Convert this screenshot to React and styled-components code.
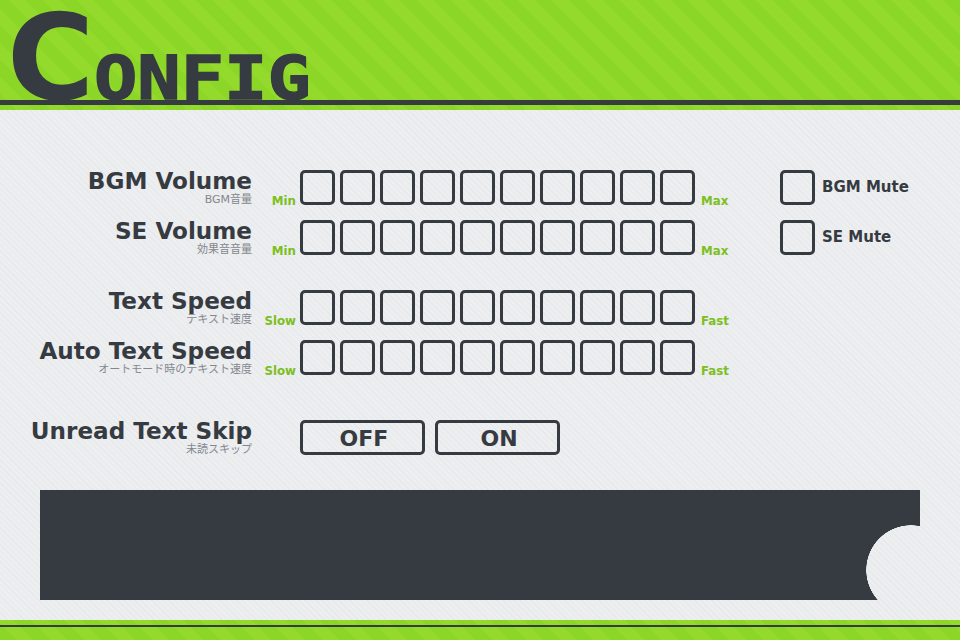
import React from "react";
import styled, { createGlobalStyle } from "styled-components";

const INK = "#363a41";

const GlobalStyle = createGlobalStyle`
  html, body {
    margin: 0;
    padding: 0;
  }
  body {
    font-family: "DejaVu Sans", sans-serif;
    color: ${INK};
  }
`;

const greenStripes = `repeating-linear-gradient(
  45deg,
  #8bd626 0,
  #8bd626 12px,
  #93da2d 12px,
  #93da2d 24px
)`;

const Screen = styled.div`
  width: 960px;
  height: 640px;
  overflow: hidden;
  display: flex;
  flex-direction: column;
  background: repeating-linear-gradient(
    45deg,
    #eceef0 0,
    #eceef0 3px,
    #e6e8eb 3px,
    #e6e8eb 4px
  );
`;

// top band with the title
const Header = styled.header`
  height: 110px;
  flex: none;
  display: flex;
  flex-direction: column;
  background: ${greenStripes};
`;

const TitleBand = styled.div`
  height: 100px;
  flex: none;
  padding-left: 7px;
`;

const Title = styled.h1`
  margin: 0;
  height: 100px;
  display: flex;
  align-items: baseline;
  font-weight: bold;
  line-height: 116px;
  white-space: nowrap;
`;

const TitleCap = styled.span`
  font-family: "DejaVu Sans", sans-serif;
  font-size: 119px;
  width: 87px;
`;

const TitleRest = styled.span`
  font-family: "DejaVu Sans Mono", monospace;
  font-size: 60px;
  -webkit-text-stroke: 1.3px ${INK};
  transform: scaleX(1.2);
  transform-origin: left;
`;

const HeaderRule = styled.div`
  height: 5px;
  flex: none;
  background: ${INK};
`;

const Content = styled.main`
  flex: 1;
  padding: 60px 40px 20px 0;
  display: flex;
  flex-direction: column;
`;

const Group = styled.section`
  display: flex;
  flex-direction: column;
  gap: 15px;
  margin-bottom: ${(p) => p.$after}px;
`;

const Row = styled.div`
  display: flex;
  height: 35px;
`;

const LabelBox = styled.div`
  width: 252px;
  flex: none;
  text-align: right;
`;

const Label = styled.div`
  font-size: 23.1px;
  font-weight: bold;
  line-height: 22px;
`;

const SubLabel = styled.div`
  font-family: "DejaVu Sans", "Noto Sans CJK JP", sans-serif;
  font-size: 11px;
  line-height: 13px;
  color: #84888e;
  margin-top: 1px;
`;

const Scale = styled.div`
  width: 48px;
  flex: none;
  align-self: flex-end;
  padding-right: 4px;
  box-sizing: border-box;
  text-align: right;
  font-size: 11.8px;
  font-weight: bold;
  line-height: 14px;
  color: #7cbf20;
  margin-bottom: -3px;
`;

const ScaleEnd = styled(Scale)`
  width: 85px;
  padding: 0 0 0 6px;
  text-align: left;
`;

const Steps = styled.div`
  display: flex;
  gap: 5px;
`;

const Box = styled.div`
  width: 35px;
  height: 35px;
  box-sizing: border-box;
  border: 3px solid ${INK};
  border-radius: 5px;
`;

const Mute = styled.div`
  display: flex;
  align-items: center;
  gap: 7px;
`;

const MuteText = styled.span`
  font-size: 15px;
  font-weight: bold;
  padding-bottom: 2px;
`;

const Toggles = styled.div`
  display: flex;
  gap: 10px;
  margin-left: 48px;
`;

const Toggle = styled.div`
  width: 125px;
  height: 35px;
  box-sizing: border-box;
  border: 3px solid ${INK};
  border-radius: 5px;
  padding: 1px 0 0 3px;
  display: flex;
  align-items: center;
  justify-content: center;
  font-size: 22px;
  font-weight: bold;
`;

// the round notch lets the page background show through
const MessagePanel = styled.div`
  height: 110px;
  margin-left: 40px;
  flex: none;
  background: radial-gradient(
    circle 45px at 871px 80px,
    transparent 44.5px,
    ${INK} 45px
  );
`;

const Footer = styled.footer`
  height: 20px;
  flex: none;
  padding-top: 5px;
  box-sizing: border-box;
  background: ${greenStripes};
`;

const FooterRule = styled.div`
  height: 2px;
  background: ${INK};
`;

const StepRow = ({ label, sub, min, max, mute }) => (
  <Row>
    <LabelBox>
      <Label>{label}</Label>
      <SubLabel>{sub}</SubLabel>
    </LabelBox>
    <Scale>{min}</Scale>
    <Steps>
      {Array.from({ length: 10 }, (_, i) => (
        <Box key={i} />
      ))}
    </Steps>
    <ScaleEnd>{max}</ScaleEnd>
    {mute && (
      <Mute>
        <Box />
        <MuteText>{mute}</MuteText>
      </Mute>
    )}
  </Row>
);

export default function App() {
  return (
    <Screen>
      <GlobalStyle />
      <Header>
        <TitleBand>
          <Title>
            <TitleCap>C</TitleCap>
            <TitleRest>ONFIG</TitleRest>
          </Title>
        </TitleBand>
        <HeaderRule />
      </Header>
      <Content>
        <Group $after={35}>
          <StepRow label="BGM Volume" sub="BGM音量" min="Min" max="Max" mute="BGM Mute" />
          <StepRow label="SE Volume" sub="効果音音量" min="Min" max="Max" mute="SE Mute" />
        </Group>
        <Group $after={45}>
          <StepRow label="Text Speed" sub="テキスト速度" min="Slow" max="Fast" />
          <StepRow label="Auto Text Speed" sub="オートモード時のテキスト速度" min="Slow" max="Fast" />
        </Group>
        <Group $after={35}>
          <Row>
            <LabelBox>
              <Label>Unread Text Skip</Label>
              <SubLabel>未読スキップ</SubLabel>
            </LabelBox>
            <Toggles>
              <Toggle>OFF</Toggle>
              <Toggle>ON</Toggle>
            </Toggles>
          </Row>
        </Group>
        <MessagePanel />
      </Content>
      <Footer>
        <FooterRule />
      </Footer>
    </Screen>
  );
}
